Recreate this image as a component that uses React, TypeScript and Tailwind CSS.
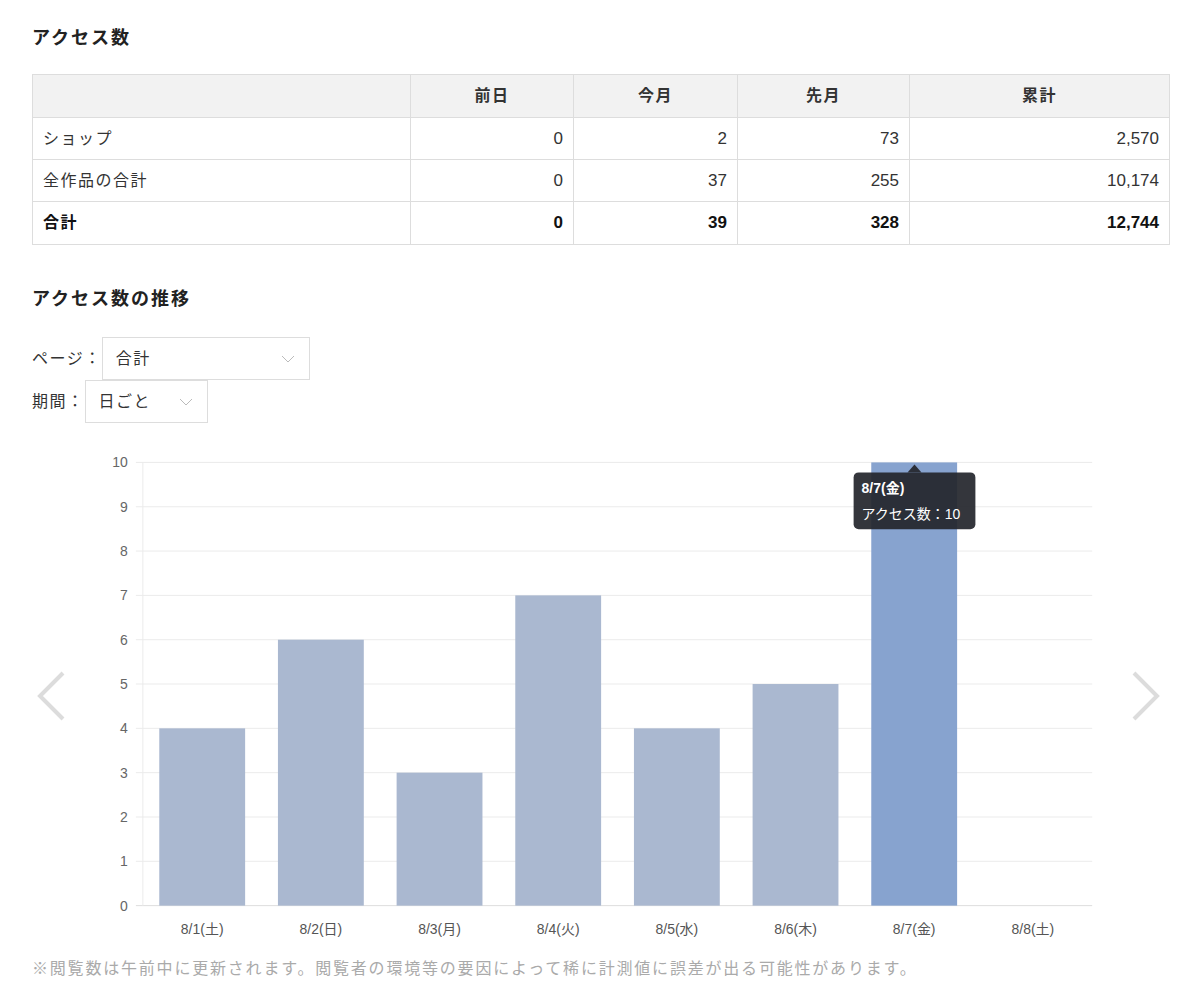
const font = { fontFamily: '"Liberation Sans", "Noto Sans CJK JP", sans-serif' };

const rows = [
  { name: 'ショップ', values: ['0', '2', '73', '2,570'], bold: false },
  { name: '全作品の合計', values: ['0', '37', '255', '10,174'], bold: false },
  { name: '合計', values: ['0', '39', '328', '12,744'], bold: true },
];

const days = [
  { label: '8/1(土)', value: 4 },
  { label: '8/2(日)', value: 6 },
  { label: '8/3(月)', value: 3 },
  { label: '8/4(火)', value: 7 },
  { label: '8/5(水)', value: 4 },
  { label: '8/6(木)', value: 5 },
  { label: '8/7(金)', value: 10 },
  { label: '8/8(土)', value: 0 },
];

function Select({ label, value, width }: { label: string; value: string; width: string }) {
  return (
    <div className="flex items-center h-[43px]">
      <span className="text-[16px] tracking-[1.5px] text-[#333]">{label}</span>
      <div className={`${width} h-[43px] border border-[#ddd] flex items-center justify-between pl-[13px] pr-[14px]`}>
        <span className="text-[16px] tracking-[1.5px] text-[#333]">{value}</span>
        <svg width="14" height="8" viewBox="0 0 14 8">
          <path d="M1 1 L7 7 L13 1" fill="none" stroke="#bbb" strokeWidth="1" />
        </svg>
      </div>
    </div>
  );
}

function Arrow({ dir }: { dir: 'left' | 'right' }) {
  return (
    <svg width="30" height="50" viewBox="0 0 30 50" className="block">
      <path
        d={dir === 'left' ? 'M27 2 L4 25 L27 48' : 'M3 2 L26 25 L3 48'}
        fill="none"
        stroke="#dcdcdc"
        strokeWidth="4"
      />
    </svg>
  );
}

function Chart() {
  const x0 = 143;
  const step = 951 / 8;
  const yFor = (v: number) => 905 - v * 44.4;
  return (
    <svg width="1060" height="510" viewBox="70 440 1060 510" className="block">
      {Array.from({ length: 11 }, (_, i) => (
        <g key={i}>
          <line x1="136" x2="1094" y1={yFor(i)} y2={yFor(i)} stroke={i === 0 ? '#ddd' : '#ebebeb'} strokeWidth="1" />
          <text x="128" y={yFor(i) + 5} textAnchor="end" fontSize="14" fill="#666" style={font}>
            {i}
          </text>
        </g>
      ))}
      <line x1={x0} x2={x0} y1="461" y2="905" stroke="#ebebeb" strokeWidth="1" />
      {days.map((d, i) => {
        const cx = x0 + step * i + step / 2;
        return (
          <g key={d.label}>
            {d.value > 0 && (
              <rect
                x={cx - 43}
                y={yFor(d.value)}
                width="86"
                height={d.value * 44.4}
                fill={i === 6 ? '#87a3cf' : '#aab8d0'}
              />
            )}
            <text x={cx} y="933" textAnchor="middle" fontSize="14" fill="#555" style={font}>
              {d.label}
            </text>
          </g>
        );
      })}
      <g>
        <path d="M909 471 L916 463 L923 471 Z" fill="#23252b" fillOpacity="0.92" />
        <rect x="855" y="471" width="122" height="57" rx="5" fill="#23252b" fillOpacity="0.92" />
        <text x="863" y="492" fontSize="14" fontWeight="bold" fill="#fff" style={font}>
          8/7(金)
        </text>
        <text x="863" y="518" fontSize="14" fill="#fff" style={font}>
          アクセス数：10
        </text>
      </g>
    </svg>
  );
}

export default function App() {
  return (
    <div className="w-[1200px] bg-white px-8 pt-[24px] text-[#333]" style={font}>
      <h2 className="text-[18px] tracking-[2px] font-bold leading-[28px] h-[28px] text-[#222]">アクセス数</h2>

      <table className="mt-[22px] w-[1138px] border-collapse text-[16px]">
        <thead>
          <tr className="h-[43px] bg-[#f2f2f2] tracking-[1.5px]">
            <th className="border border-[#ddd] w-[378px]"></th>
            <th className="border border-[#ddd] w-[163px] font-bold">前日</th>
            <th className="border border-[#ddd] w-[164px] font-bold">今月</th>
            <th className="border border-[#ddd] w-[172px] font-bold">先月</th>
            <th className="border border-[#ddd] font-bold">累計</th>
          </tr>
        </thead>
        <tbody>
          {rows.map((r) => (
            <tr key={r.name} className={r.bold ? 'h-[43px] font-bold text-[#111]' : 'h-[42px]'}>
              <td className="border border-[#ddd] pl-[10px] tracking-[1.5px]">{r.name}</td>
              {r.values.map((v, i) => (
                <td key={i} className="border border-[#ddd] text-right pr-[10px] text-[17px]">
                  {v}
                </td>
              ))}
            </tr>
          ))}
        </tbody>
      </table>

      <h2 className="mt-[40px] text-[18px] tracking-[2px] font-bold leading-[28px] h-[28px] text-[#222]">アクセス数の推移</h2>

      <div className="mt-[24px] flex flex-col">
        <Select label="ページ：" value="合計" width="w-[208px]" />
        <Select label="期間：" value="日ごと" width="w-[123px]" />
      </div>

      <div className="mt-[18px] flex items-center">
        <div className="w-[38px] pl-[4px]">
          <Arrow dir="left" />
        </div>
        <Chart />
        <div className="w-[40px] pl-[3px]">
          <Arrow dir="right" />
        </div>
      </div>

      <p className="mt-[6px] text-[16px] tracking-[1.8px] leading-[24px] text-[#aaa]">
        ※閲覧数は午前中に更新されます。閲覧者の環境等の要因によって稀に計測値に誤差が出る可能性があります。
      </p>
    </div>
  );
}
